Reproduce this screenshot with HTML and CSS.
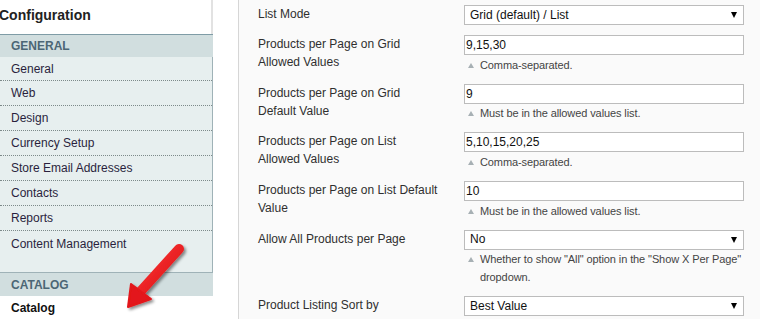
FILE: index.html
```html
<!DOCTYPE html>
<html>
<head>
  <title>Configuration - Catalog</title>
  <link rel="stylesheet" href="styles.css">
</head>
<body>
<div class="page">
  <div class="side-col">
    <h3 class="side-title">Configuration</h3>

    <div class="section-head">General</div>
    <ul class="tabs">
      <li>General</li>
      <li>Web</li>
      <li>Design</li>
      <li>Currency Setup</li>
      <li>Store Email Addresses</li>
      <li>Contacts</li>
      <li>Reports</li>
      <li>Content Management</li>
    </ul>

    <div class="section-head">Catalog</div>
    <div class="tab-active">Catalog</div>
  </div>

  <div class="spacer"></div>

  <div class="main-col">
    <div class="row">
      <div class="label">List Mode</div>
      <div class="value">
        <div class="select">Grid (default) / List<span class="caret"></span></div>
      </div>
    </div>

    <div class="row">
      <div class="label">Products per Page on Grid Allowed Values</div>
      <div class="value">
        <div class="input">9,15,30</div>
        <div class="hint"><span class="hint-icon"></span><span>Comma-separated.</span></div>
      </div>
    </div>

    <div class="row">
      <div class="label">Products per Page on Grid Default Value</div>
      <div class="value">
        <div class="input">9</div>
        <div class="hint"><span class="hint-icon"></span><span>Must be in the allowed values list.</span></div>
      </div>
    </div>

    <div class="row">
      <div class="label">Products per Page on List Allowed Values</div>
      <div class="value">
        <div class="input">5,10,15,20,25</div>
        <div class="hint"><span class="hint-icon"></span><span>Comma-separated.</span></div>
      </div>
    </div>

    <div class="row">
      <div class="label">Products per Page on List Default Value</div>
      <div class="value">
        <div class="input">10</div>
        <div class="hint"><span class="hint-icon"></span><span>Must be in the allowed values list.</span></div>
      </div>
    </div>

    <div class="row">
      <div class="label">Allow All Products per Page</div>
      <div class="value">
        <div class="select">No<span class="caret"></span></div>
        <div class="hint"><span class="hint-icon"></span><span>Whether to show "All" option in the "Show X Per Page" dropdown.</span></div>
      </div>
    </div>

    <div class="row">
      <div class="label">Product Listing Sort by</div>
      <div class="value">
        <div class="select">Best Value<span class="caret"></span></div>
      </div>
    </div>
  </div>
</div>

<!-- red pointer drawn over the sidebar -->
<svg class="pointer" width="760" height="319" viewBox="0 0 760 319">
  <defs>
    <filter id="shade" x="-30%" y="-30%" width="160%" height="160%">
      <feDropShadow dx="2" dy="2" stdDeviation="1.6" flood-color="#000" flood-opacity="0.45"/>
    </filter>
    <linearGradient id="red" x1="0" y1="0" x2="1" y2="1">
      <stop offset="0" stop-color="#ff3b3b"/>
      <stop offset="1" stop-color="#d80b10"/>
    </linearGradient>
  </defs>
  <g filter="url(#shade)">
    <line x1="179" y1="249" x2="140" y2="292" stroke="url(#red)" stroke-width="10" stroke-linecap="round"/>
    <polygon points="128,307 131,284 151,299" fill="#e3151a" stroke="#e3151a" stroke-width="2" stroke-linejoin="round"/>
  </g>
</svg>
</body>
</html>
```

FILE: styles.css
```css
body {
  margin: 0;
  font-family: "Liberation Sans", Arial, sans-serif;
  font-size: 12px;
  color: #2f2f2f;
  background: #fff;
}

.page {
  display: flex;
  height: 319px;
  overflow: hidden;
}

/* left column */
.side-col {
  width: 213px;
  flex: none;
}
.side-title {
  margin: 0 0 0 -1px;
  height: 34px;
  line-height: 30px;
  font-size: 14px;
  font-weight: bold;
  color: #222;
  border-right: 2px solid #e2e2e2;
}
.section-head {
  height: 23px;
  line-height: 24px;
  padding-left: 11px;
  background: #d1dedf;
  color: #4c6675;
  font-weight: bold;
  text-transform: uppercase;
}
.side-title + .section-head {
  border-top: 1px solid #7f9ca6;
  height: 22px;
  line-height: 23px;
}
.tabs {
  list-style: none;
  margin: 0;
  padding: 0 0 16px;
  background: #e7efef;
  border-right: 1px solid #9fb2b7;
  border-bottom: 1px solid #9fb2b7;
}
.tabs li {
  padding: 1px 0 0 11px;
  line-height: 23px;
  border-bottom: 1px dotted #7d8a8a;
  color: #2a1f3d;
}
.tabs li:first-child {
  line-height: 22px;
}
.tabs li:last-child {
  border-bottom: none;
  line-height: 24px;
}
.tab-active {
  padding: 1px 0 0 11px;
  line-height: 23px;
  font-weight: bold;
  color: #111;
}

.spacer {
  width: 25px;
  flex: none;
}

/* form area */
.main-col {
  flex: 1;
  background: #fafafa;
  border-left: 1px solid #d6d6d6;
  padding: 5px 0 0 19px;
}
.row {
  display: flex;
  padding-bottom: 10px;
}
.label {
  width: 182px;
  margin-right: 24px;
  line-height: 18px;
  color: #2f2f2f;
}
.value {
  width: 280px;
}
.input,
.select {
  box-sizing: border-box;
  height: 20px;
  line-height: 19px;
  border: 1px solid #bcbcbc;
  background: #fff;
  color: #111;
  padding: 0 3px 0 1px;
}
.select {
  display: flex;
  justify-content: space-between;
  align-items: center;
  padding: 0 6px 0 5px;
}
.caret {
  width: 0;
  height: 0;
  border-left: 3px solid transparent;
  border-right: 3px solid transparent;
  border-top: 6px solid #000;
}
.hint {
  display: flex;
  padding-top: 0.7px;
  font-size: 11px;
  line-height: 18px;
  letter-spacing: -0.1px;
  color: #444;
}
.hint-icon {
  flex: none;
  width: 0;
  height: 0;
  margin: 7px 6px 0 4px;
  border-left: 3px solid transparent;
  border-right: 3px solid transparent;
  border-bottom: 5px solid #a7b0b4;
}

.pointer {
  position: absolute;
  left: 0;
  top: 0;
  pointer-events: none;
}
```
